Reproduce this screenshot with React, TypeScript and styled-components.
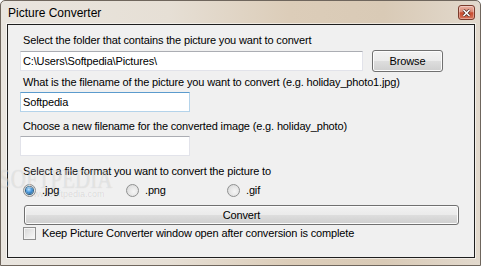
import React from 'react';
import styled, { createGlobalStyle } from 'styled-components';

const GlobalStyle = createGlobalStyle`
    html, body {
        margin: 0;
        padding: 0;
        background: #ffffff;
    }
    * {
        box-sizing: border-box;
    }
`;

const Window = styled.div`
    position: relative;
    width: 481px;
    height: 266px;
    display: flex;
    flex-direction: column;
    border: 1px solid #6f665d;
    border-radius: 5px 5px 0 0;
    overflow: hidden;
    background: linear-gradient(90deg, #e9e5df 0%, #e6dfd5 35%, #dccdb9 60%, #d9cab6 80%, #e2d9cd 100%);
    font-family: "Liberation Sans", Arial, sans-serif;
`;

const TitleBar = styled.div`
    height: 23px;
    flex: none;
    display: flex;
    align-items: center;
    justify-content: space-between;
    padding: 0 5px 4px 7px;
`;

const Title = styled.div`
    font-size: 12px;
    color: #000;
    margin-top: 5px;
`;

const CloseButton = styled.div`
    width: 17px;
    height: 15px;
    margin-top: 4px;
    display: flex;
    align-items: center;
    justify-content: center;
    border: 1px solid #7a3b2c;
    border-radius: 3px;
    background: linear-gradient(#eab1a2 0%, #dc8a75 45%, #c84a2e 52%, #d8745a 100%);
    box-shadow: inset 0 0 0 1px rgba(255, 255, 255, 0.35);
`;

const FrameBody = styled.div`
    flex: 1;
    padding: 0 5px 7px 6px;
    display: flex;
`;

const Client = styled.div`
    flex: 1;
    display: flex;
    flex-direction: column;
    background: #f0f0f0;
    border: 1px solid #1e1e1e;
    box-shadow: 0 0 0 1px rgba(255, 255, 255, 0.55);
    padding: 0 0 0 12px;
    font-size: 11px;
    letter-spacing: -0.15px;
    color: #000;
`;

const Label = styled.div<{ $top: number }>`
    margin-top: ${p => p.$top}px;
    padding-left: 3px;
    height: 14px;
    line-height: 14px;
    white-space: nowrap;
`;

const Row = styled.div<{ $top: number }>`
    display: flex;
    align-items: center;
    margin-top: ${p => p.$top}px;
`;

const TextBox = styled.div<{ $width: number; $focused?: boolean }>`
    width: ${p => p.$width}px;
    height: 20px;
    background: #fff;
    border: 1px solid ${p => (p.$focused ? '#b4d3ea' : '#e2e3ea')};
    border-top-color: ${p => (p.$focused ? '#5b9bcd' : '#abadb3')};
    padding-left: 2px;
    line-height: 18px;
    white-space: nowrap;
`;

const PushButton = styled.div<{ $width: number; $height: number; $left?: number }>`
    width: ${p => p.$width}px;
    height: ${p => p.$height}px;
    margin-left: ${p => p.$left || 0}px;
    display: flex;
    align-items: center;
    justify-content: center;
    border: 1px solid #707070;
    border-radius: 3px;
    background: linear-gradient(#f2f2f2 0%, #ebebeb 48%, #dddddd 52%, #cfcfcf 100%);
    box-shadow: inset 0 0 0 1px #fcfcfc;
`;

const RadioGroup = styled.div`
    display: grid;
    grid-template-columns: 103px 101px auto;
    margin: 5px 0 0 3px;
    height: 14px;
    align-items: center;
`;

const RadioOption = styled.div`
    display: flex;
    align-items: center;
    gap: 6px;
`;

const RadioDot = styled.div<{ $checked?: boolean }>`
    width: 13px;
    height: 13px;
    border-radius: 50%;
    border: 1px solid #8f9090;
    background: radial-gradient(circle at 60% 60%, #f6f6f6 0%, #e2e2e2 60%, #cfcfcf 100%);
    display: flex;
    align-items: center;
    justify-content: center;
    &::after {
        content: '';
        display: ${p => (p.$checked ? 'block' : 'none')};
        width: 7px;
        height: 7px;
        border-radius: 50%;
        background: radial-gradient(circle at 40% 35%, #bfe6ff 0%, #4c9be0 45%, #1e5a8a 100%);
        box-shadow: 0 0 0 1px #2b5f86;
    }
`;

const CheckRow = styled.div`
    display: flex;
    align-items: center;
    gap: 6px;
    margin: 1px 0 0 3px;
    height: 14px;
`;

const CheckBox = styled.div`
    width: 13px;
    height: 13px;
    border: 1px solid #8f8f8f;
    background: linear-gradient(135deg, #d6d6d6 0%, #efefef 70%, #fbfbfb 100%);
    box-shadow: inset 0 0 0 1px #f4f4f4;
`;

const Watermark = styled.div`
    position: absolute;
    left: -2px;
    top: 163px;
    font-family: "Liberation Serif", serif;
    font-size: 27px;
    transform: scaleX(0.78);
    transform-origin: left top;
    color: rgba(255, 255, 255, 0.4);
    text-shadow: 0 0 1px rgba(0, 0, 0, 0.14);
    pointer-events: none;
`;

const WatermarkUrl = styled.div`
    position: absolute;
    left: 26px;
    top: 188px;
    font-size: 9px;
    color: rgba(0, 0, 0, 0.1);
    pointer-events: none;
`;

const App: React.FC = () => {
    return (
        <>
            <GlobalStyle />
            <Window>
                <TitleBar>
                    <Title>Picture Converter</Title>
                    <CloseButton>
                        <svg width="9" height="8" viewBox="0 0 9 8">
                            <path d="M1.5 1 L7.5 7 M7.5 1 L1.5 7" stroke="#4a2a22" strokeWidth="3" />
                            <path d="M1.5 1 L7.5 7 M7.5 1 L1.5 7" stroke="#ffffff" strokeWidth="1.6" />
                        </svg>
                    </CloseButton>
                </TitleBar>
                <FrameBody>
                    <Client>
                        <Label $top={8}>Select the folder that contains the picture you want to convert</Label>
                        <Row $top={3}>
                            <TextBox $width={343}>C:\Users\Softpedia\Pictures\</TextBox>
                            <PushButton $width={71} $height={22} $left={9}>Browse</PushButton>
                        </Row>
                        <Label $top={3}>What is the filename of the picture you want to convert (e.g. holiday_photo1.jpg)</Label>
                        <Row $top={3}>
                            <TextBox $width={170} $focused>Softpedia</TextBox>
                        </Row>
                        <Label $top={7}>Choose a new filename for the converted image (e.g. holiday_photo)</Label>
                        <Row $top={3}>
                            <TextBox $width={170} />
                        </Row>
                        <Label $top={8}>Select a file format you want to convert the picture to</Label>
                        <RadioGroup>
                            <RadioOption><RadioDot $checked />.jpg</RadioOption>
                            <RadioOption><RadioDot />.png</RadioOption>
                            <RadioOption><RadioDot />.gif</RadioOption>
                        </RadioGroup>
                        <Row $top={8}>
                            <PushButton $width={435} $height={20} $left={4}>Convert</PushButton>
                        </Row>
                        <CheckRow>
                            <CheckBox />
                            Keep Picture Converter window open after conversion is complete
                        </CheckRow>
                    </Client>
                </FrameBody>
                <Watermark>SOFTPEDIA</Watermark>
                <WatermarkUrl>www.softpedia.com</WatermarkUrl>
            </Window>
        </>
    );
};

export default App;
